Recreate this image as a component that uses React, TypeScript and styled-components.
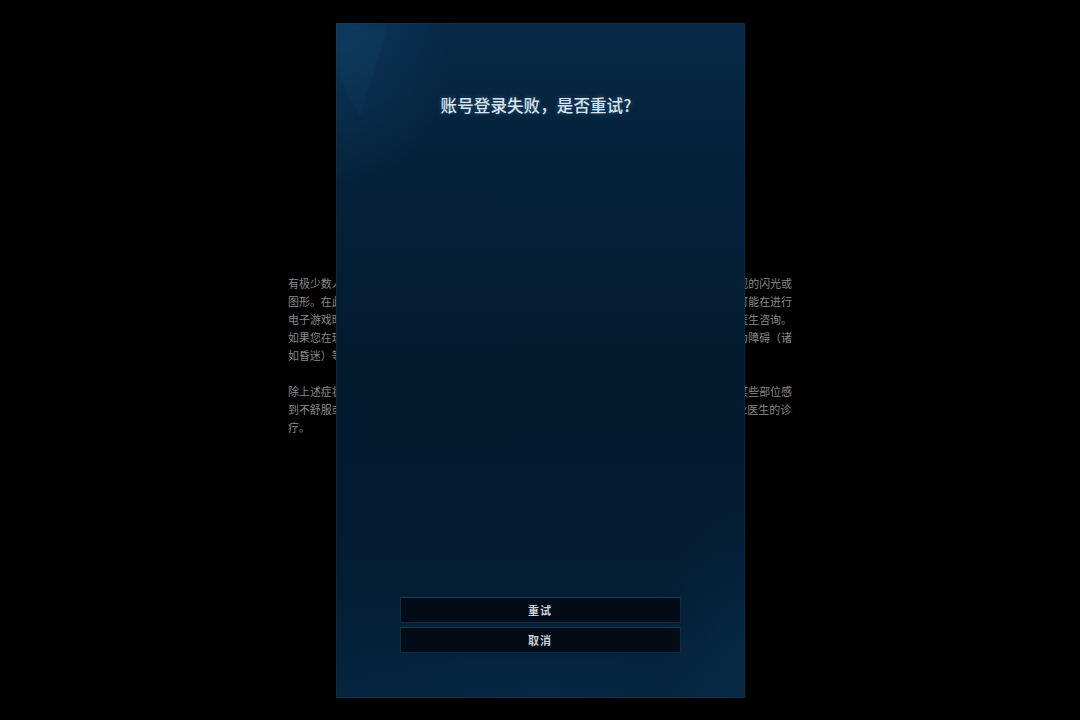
import styled, { createGlobalStyle } from 'styled-components';

const GlobalStyle = createGlobalStyle`
    html, body {
        margin: 0;
        padding: 0;
        background: #000;
    }
    body {
        font-family: "Noto Sans CJK SC", "Noto Sans", sans-serif;
    }
`;

const warningLines: { text: string; full?: boolean }[] = [
    { text: '有极少数人在观看一些视觉图像时可能会突然出现癫痫发作，这些图像包括了电子游戏中所出现的闪光或', full: true },
    { text: '图形。在此之前从未有过癫痫发作史的人，也都可能患有未被诊断出的病症，而导致其在日后可能在进行', full: true },
    { text: '电子游戏时突然出现癫痫发作。如果您或您的家人曾有过癫痫病史，请在开始玩游戏之前先向医生咨询。', full: true },
    { text: '如果您在玩游戏时出现了头晕、视觉改变、眼睛或肌肉抽搐、失去意识、不自主的动作、定向力障碍（诸', full: true },
    { text: '如昏迷）等任何症状，请立即停止游戏并咨询医生。' },
    { text: '' },
    { text: '除上述症状外，如果您在玩游戏时还感到头痛、眼睛疲劳、手腕或手臂肌肉酸痛，或身体其他某些部位感', full: true },
    { text: '到不舒服或疼痛，请立即停止游戏并适当休息。如果休息后症状仍然持续，请务必及时寻求专业医生的诊' },
    { text: '疗。' },
];

export default function App() {
    return (
        <>
            <GlobalStyle />
            <Page>
                <Warning>
                    {warningLines.map((line, i) => (
                        <WarningLine key={i} $full={line.full}>
                            {line.text || '\u00a0'}
                        </WarningLine>
                    ))}
                </Warning>
                <Dialog>
                    <DialogGlow />
                    <Title>账号登录失败，是否重试?</Title>
                    <Actions>
                        <ActionButton>重试</ActionButton>
                        <ActionButton>取消</ActionButton>
                    </Actions>
                </Dialog>
            </Page>
        </>
    );
}

const Page = styled.div`
    display: grid;
    height: 720px;
    background: #000;
    overflow: hidden;

    & > * {
        grid-area: 1 / 1;
    }
`;

const Warning = styled.div`
    justify-self: center;
    align-self: start;
    width: 504px;
    margin-top: 274px;
    color: #8a8a8a;
    font-size: 10.95px;
    line-height: 18px;
`;

const WarningLine = styled.div<{ $full?: boolean }>`
    white-space: nowrap;
    text-align: ${(p) => (p.$full ? 'justify' : 'left')};
    text-align-last: ${(p) => (p.$full ? 'justify' : 'left')};
`;

const Dialog = styled.div`
    position: relative;
    justify-self: center;
    align-self: center;
    width: 409px;
    height: 675px;
    box-sizing: border-box;
    display: flex;
    flex-direction: column;
    align-items: center;
    padding: 70px 0 45px;
    overflow: hidden;
    background:
        radial-gradient(ellipse 120px 170px at 0% 0%, rgba(14, 66, 102, 0.6), transparent 100%),
        radial-gradient(ellipse 90px 140px at 100% 92%, rgba(10, 50, 80, 0.4), transparent 100%),
        radial-gradient(ellipse 300px 80px at 50% 100%, rgba(8, 44, 72, 0.5), transparent 100%),
        linear-gradient(180deg, #072846 0%, #052139 22%, #031b2f 50%, #031c31 78%, #05233c 100%);
    box-shadow: inset 0 0 0 1px rgba(25, 70, 105, 0.3);
`;

const DialogGlow = styled.div`
    position: absolute;
    inset: 0;
    pointer-events: none;
    background: linear-gradient(180deg, rgba(40, 110, 160, 0.08), transparent 70%);
    clip-path: polygon(0 0, 13% 0, 6% 14%, 0 7%);
    filter: blur(3px);
`;

const Title = styled.h1`
    position: relative;
    margin: 0 8px 0 0;
    font-size: 16.5px;
    line-height: 24px;
    font-weight: 500;
    color: #d8e4eb;
    text-shadow: 0 0 5px rgba(110, 170, 215, 0.4);
    letter-spacing: 0.1px;
`;

const Actions = styled.div`
    position: relative;
    margin-top: auto;
    display: flex;
    flex-direction: column;
    gap: 4px;
    width: 281px;
`;

const ActionButton = styled.button`
    height: 26px;
    padding: 0;
    border: 1px solid #0b2c42;
    border-top-color: #143e56;
    background: #020b16;
    color: #cdd4da;
    font-family: "Noto Sans CJK SC", sans-serif;
    font-size: 11px;
    font-weight: 700;
    letter-spacing: 1px;
    cursor: pointer;
`;
